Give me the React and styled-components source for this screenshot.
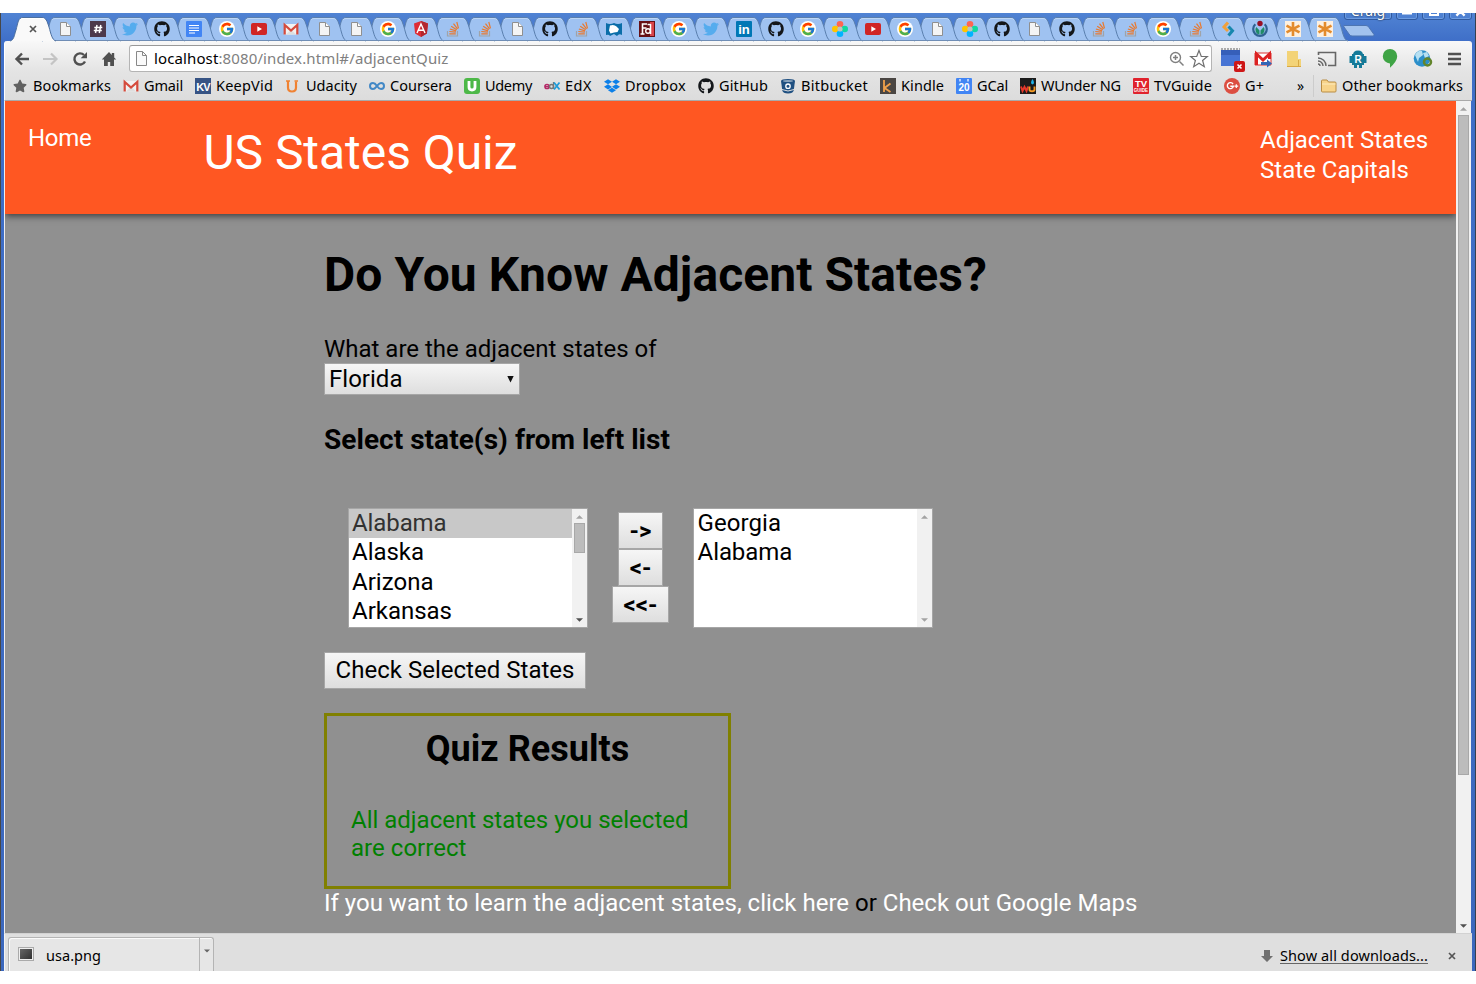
import React, { useLayoutEffect, useRef, useState } from "react";
import styled, { createGlobalStyle } from "styled-components";
import { FaGithub, FaTwitter, FaDropbox, FaStar } from "react-icons/fa";
import { FcGoogle } from "react-icons/fc";

const Global = createGlobalStyle`
  * { box-sizing: border-box; }
  body { margin: 0; background: #fff; overflow: hidden; }
  svg { display: block; flex: none; overflow: visible; }
  button { margin: 0; }
`;

const Desktop = styled.div`
  width: 1476px;
  height: 984px;
  padding-top: 13px;
  background: #fff;
`;
const Window = styled.div`
  height: 958px;
  display: flex;
  flex-direction: column;
  overflow: hidden;
  font-family: "Noto Sans", "Open Sans", sans-serif;
  color: #000;
  background: linear-gradient(#5083d3, #3f6fc8 28px, #3c68bd);
  border-left: 1px solid #474747;
  border-right: 1px solid #35404f;
  padding: 0 3px;
`;
const TabStrip = styled.div`
  position: relative;
  height: 28px;
  flex: none;
  padding: 4px 0 0 6px;
  display: flex;
`;
const TabBox = styled.div`
  position: relative;
  flex: none;
  width: 46px;
  height: 24px;
  margin-right: -13.71px;
  display: flex;
  align-items: center;
  justify-content: center;
  z-index: ${(p) => p.$z};
`;
const TabShape = styled.svg`
  position: absolute;
  inset: 0;
`;
const TabIcon = styled.div`
  position: relative;
  width: 16px;
  height: 16px;
  display: flex;
  align-items: center;
  justify-content: center;
`;
const NewTab = styled.svg`
  margin: 8px 0 0 9px;
`;
const Controls = styled.div`
  position: absolute;
  right: 0;
  top: -11px;
  display: flex;
  gap: 4px;
`;
const Control = styled.div`
  width: ${(p) => p.$w}px;
  height: 18px;
  border: 1px solid #315a9f;
  box-shadow: inset 0 0 0 1px #6d9ce1;
  border-radius: 3px;
  display: flex;
  align-items: center;
  justify-content: center;
  color: #fff;
  font: 14px/14px "Noto Sans", sans-serif;
  text-shadow: 0 0 2px #111;
`;
const Chrome = styled.div`
  flex: none;
  height: 60px;
  display: flex;
  flex-direction: column;
  background: linear-gradient(#f8f8f8, #e4e4e4 30px, #dcdcdc);
  border-bottom: 1px solid #a9a9a9;
  border-left: 1px solid #fff;
  border-radius: 3px 3px 0 0;
`;
const Toolbar = styled.div`
  height: 31px;
  padding: 4px 10px 0 9px;
  display: flex;
  align-items: center;
`;
const NavIcons = styled.div`
  display: flex;
  gap: 13px;
  width: 115px;
`;
const Omnibox = styled.div`
  width: 1083px;
  height: 27px;
  background: #fff;
  border: 1px solid #b4b4b4;
  border-top-color: #999;
  border-radius: 3px;
  display: flex;
  align-items: center;
  padding: 0 2px 0 5px;
`;
const Url = styled.div`
  flex: 1;
  margin-left: 6px;
  padding-bottom: 2px;
  font-size: 15px;
  line-height: 22px;
  color: #808080;
  b { font-weight: 400; color: #000; }
`;
const Extensions = styled.div`
  flex: 1;
  display: flex;
  align-items: center;
  gap: 15px;
  padding-left: 9px;
`;
const Bookmarks = styled.div`
  height: 28px;
  padding: 0 9px 0 7px;
  display: flex;
  align-items: center;
  gap: 12px;
`;
const Bookmark = styled.div`
  display: flex;
  align-items: center;
  gap: 5px;
  font-size: 14.5px;
  line-height: 20px;
`;
const OtherGroup = styled.div`
  margin-left: auto;
  display: flex;
  align-items: center;
  gap: 7px;
  font-size: 14px;
`;
const Divider = styled.div`
  width: 1px;
  height: 22px;
  margin-left: 1px;
  background: #ccc;
`;
const FitBox = styled.span`
  display: inline-block;
  white-space: pre;
`;
const BookmarkName = styled.div`
  padding-bottom: 2px;
`;

const Viewport = styled.div`
  flex: 1;
  display: flex;
  min-height: 0;
  border-left: 1px solid #eee;
`;
const Page = styled.div`
  width: 1451px;
  background: #909090;
  font-family: Roboto, sans-serif;
  font-size: 24px;
  line-height: 28px;
  overflow: hidden;
`;
const Header = styled.header`
  height: 113px;
  background: #ff5722;
  color: #fff;
  display: flex;
  align-items: flex-start;
  padding: 0 28px 0 23px;
  box-shadow: 0 2px 7px rgba(0, 0, 0, 0.6);
`;
const HomeLink = styled.div`
  width: 175.5px;
  padding-top: 23px;
`;
const Brand = styled.div`
  flex: 1;
  padding-top: 24px;
  font-size: 48px;
  line-height: 56px;
`;
const HeaderLinks = styled.div`
  padding-top: 24px;
  line-height: 30px;
`;
const Main = styled.main`
  padding: 33px 0 0 319px;
`;
const Title = styled.h1`
  margin: 0 0 32px;
  font-size: 48px;
  line-height: 56px;
  font-weight: 700;
`;
const Subtitle = styled.h3`
  margin: 29px 0 52px;
  font-size: 28px;
  line-height: 32px;
  font-weight: 700;
`;
const face = `
  background: linear-gradient(#f6f6f6, #dedede);
  border: 1px solid #a6a6a6;
  border-radius: 0;
  color: #000;
  font-family: Roboto, sans-serif;
  font-size: 24px;
`;
const Select = styled.div`
  ${face}
  width: 196px;
  height: 32px;
  padding: 0 5px 0 4px;
  display: flex;
  align-items: center;
  justify-content: space-between;
`;
const Picker = styled.div`
  display: flex;
  margin-left: 24px;
  height: 120px;
`;
const List = styled.div`
  width: 240px;
  height: 120px;
  border: 1px solid #a6a6a6;
  background: #fff;
  display: flex;
`;
const Options = styled.div`
  flex: 1;
`;
const Option = styled.div`
  height: 29.4px;
  line-height: 28px;
  padding-left: ${(p) => p.$inset || 3}px;
  background: ${(p) => (p.$on ? "#c8c8c8" : "transparent")};
  color: ${(p) => (p.$on ? "#323232" : "#000")};
`;
const Bar = styled.div`
  width: 15px;
  background: #f1f1f1;
  display: flex;
  flex-direction: column;
  align-items: center;
  justify-content: space-between;
  padding: 6px 0 5px;
`;
const Thumb = styled.div`
  width: 11px;
  height: ${(p) => p.$h}px;
  margin-top: 4px;
  margin-bottom: auto;
  background: #bcbcbc;
  border: 1px solid #a8a8a8;
`;
const Movers = styled.div`
  width: 105px;
  padding: 4px 0 0;
  display: flex;
  flex-direction: column;
  align-items: center;
`;
const MoveButton = styled.button`
  ${face}
  width: ${(p) => p.$w}px;
  height: 37px;
  padding: 0;
  font-weight: 700;
`;
const CheckButton = styled.button`
  ${face}
  display: block;
  width: 262px;
  height: 37px;
  padding: 0 0 2px;
  margin: 24px 0;
`;
const Results = styled.section`
  width: 407px;
  height: 176px;
  border: 3px solid #808000;
  padding: 12px 24px 0;
`;
const ResultsTitle = styled.h2`
  margin: 0 0 36px;
  font-size: 36px;
  line-height: 42px;
  text-align: center;
`;
const Verdict = styled.div`
  color: #008000;
`;
const Learn = styled.div`
  color: #000;
  em { font-style: normal; color: #fff; }
`;
const Shelf = styled.div`
  flex: none;
  height: 38px;
  background: #dfdfdf;
  border-top: 1px solid #d2d2d2;
  border-left: 1px solid #f4f4f4;
  display: flex;
  padding: 3px 16px 0 3px;
  font-size: 14.5px;
`;
const Download = styled.div`
  width: 206px;
  display: flex;
  border: 1px solid #b4b4b4;
  border-bottom: 0;
  border-radius: 3px 3px 0 0;
  background: #e6e6e6;
  box-shadow: inset 1px 1px #fafafa;
`;
const DownloadName = styled.div`
  flex: 1;
  display: flex;
  align-items: center;
  gap: 12px;
  padding: 0 0 0 9px;
  border-right: 1px solid #b4b4b4;
`;
const DownloadMenu = styled.div`
  width: 13px;
  padding: 11px 0 0 4px;
`;
const Thumbnail = styled.div`
  width: 16px;
  height: 14px;
  margin-top: -2px;
  border: 1px solid #aaa;
  box-shadow: inset 0 0 0 1px #eee;
  padding: 1px;
  background: linear-gradient(135deg, #666, #303030) content-box;
`;
const ShelfRight = styled.div`
  margin-left: auto;
  padding-top: 3px;
  display: flex;
  align-items: center;
  gap: 7px;
`;
const ShowAll = styled.div`
  margin-right: 13px;
  border-bottom: 1px solid #666;
  line-height: 17px;
  height: 17px;
`;

/* Label that spreads its letters so the text takes exactly the width w. */
function Fit({ w, children }) {
  const ref = useRef(null);
  const [space, setSpace] = useState(0);
  useLayoutEffect(() => {
    const el = ref.current;
    const range = document.createRange();
    range.selectNodeContents(el);
    const natural = range.getBoundingClientRect().width;
    setSpace((w - natural) / el.textContent.length);
  }, [w]);
  return (
    <FitBox ref={ref} style={{ letterSpacing: space }}>
      {children}
    </FitBox>
  );
}

const Svg = ({ w = 16, h = 16, box, children }) => (
  <svg width={w} height={h} viewBox={box || `0 0 ${w} ${h}`}>{children}</svg>
);
const glyph = { fontFamily: "Liberation Sans, sans-serif", fontWeight: 700, textAnchor: "middle" };

const Doc = () => (
  <Svg><path d="M3.500 1.500h6l4 4v9h-10z" fill="#f4f4f4" stroke="#8f8f8f" /><path d="M9.500 1.500v4h4" fill="#fff" stroke="#8f8f8f" /></Svg>
);
const Slack = () => (
  <Svg><rect width="16" height="16" fill="#4d394b" /><path d="M7 4 5.500 12M10.800 4 9.300 12M4.300 6.500h8M3.800 9.500h8" stroke="#fff" strokeWidth="1.500" /></Svg>
);
const Bird = () => <FaTwitter size={16} color="#55acee" />;
const Cat = () => <FaGithub size={16} color="#14171a" />;
const GDocs = () => (
  <Svg><rect width="16" height="16" rx="1" fill="#4285f4" /><path d="M3 4.500h10M3 7h10M3 9.500h10M3 12h6" stroke="#fff" strokeWidth="1.200" /></Svg>
);
const Google = () => (
  <Svg><circle cx="8" cy="8" r="8" fill="#fff" /><g transform="translate(.5 .5)"><FcGoogle size={15} /></g></Svg>
);
const Tube = () => (
  <Svg><rect y="2" width="16" height="12" rx="2" fill="#d02525" /><path d="M6.300 5.300v5.400L11 8z" fill="#fff" /></Svg>
);
const Mail = () => (
  <Svg><path d="M1 3h14v10.500H1z" fill="#f2f2f2" /><path d="M3 13.500 8 8.500l5 5z" fill="#dedede" /><path d="M1.700 13.500V4L8 9.500 14.300 4v9.500" fill="none" stroke="#d54b3d" strokeWidth="2.200" /></Svg>
);
const Angular = () => (
  <Svg><path d="M8 0l7 2.500-1.100 10L8 16l-5.900-3.500L1 2.500z" fill="#dd2c35" /><path d="M8 0l7 2.500-1.100 10L8 16z" fill="#b3272f" /><path d="M4 12 8 3l4 9M5.600 9.300h4.800" fill="none" stroke="#fff" strokeWidth="1.400" /></Svg>
);
const Stack = () => (
  <Svg>
    <path d="M2.500 10v5h10v-5" fill="none" stroke="#a0a3a8" strokeWidth="1.200" />
    <path d="M4.300 12.800h6.500M4.300 10.500l6.500.7M4.900 8l6.200 1.900M6.200 5.200l5.500 3.500M8.500 2.700l4 5.200M11.800 1l1.700 6.300" stroke="#e9792f" strokeWidth="1.200" />
  </Svg>
);
const Mdn = () => (
  <Svg><path d="M0 2q4 2 8 0 4 2 8 0v12q-3-2-5 1l-3-2-4 2q-1-2-4-1z" fill="#0a6da8" /><path d="M4 4.500q4-1.500 6.500 1L13 8l-1.500 3-3.500.5-3.500 1L3 9.500z" fill="#fff" /></Svg>
);
const Fd = () => (
  <Svg><rect width="16" height="16" fill="#651016" /><path d="M11 1h4v14h-4z" fill="#d8444a" /><path d="M3.500 13V3H8M3.500 7h4M1.500 13h4" fill="none" stroke="#fff" strokeWidth="1.600" /><circle cx="9" cy="10" r="2.300" fill="none" stroke="#fff" strokeWidth="1.400" /><path d="M11.500 3v10M8.500 3.500h3" stroke="#fff" strokeWidth="1.500" /></Svg>
);
const Linked = () => (
  <Svg><rect width="16" height="16" rx="1" fill="#0077b5" /><text x="8" y="12.500" fontSize="13" fill="#fff" {...glyph}>in</text></Svg>
);
const Flower = () => (
  <Svg>
    <circle cx="8" cy="3.300" r="3.300" fill="#ff6550" /><circle cx="3.300" cy="8" r="3.300" fill="#ffc400" />
    <circle cx="12.700" cy="8" r="3.300" fill="#11d8a0" /><circle cx="8" cy="12.700" r="3.300" fill="#00b4ff" />
    <circle cx="8" cy="8" r="2.600" fill="#b9c5c0" />
  </Svg>
);
const Arrows = () => (
  <Svg><path d="M8 1.500 4 6l4 4" fill="none" stroke="#f0a03b" strokeWidth="3" /><path d="m8.500 5.500 4 4.200L8.500 14.500" fill="none" stroke="#1787ad" strokeWidth="3" /></Svg>
);
const Wiki = () => (
  <Svg>
    <path d="M3.300 3.200a6.800 6.800 0 1 0 9.400 0" fill="none" stroke="#2f6291" strokeWidth="2.200" />
    <path d="M4.300 6a4.600 4.600 0 0 0 3.200 7.400V9.500zM11.700 6a4.600 4.600 0 0 1-3.200 7.400V9.500z" fill="#208b68" />
    <circle cx="8" cy="2.500" r="2.700" fill="#970f24" />
  </Svg>
);
const Star6 = () => (
  <Svg><rect width="16" height="16" fill="#fdf0e0" /><path d="M8 1v14M1.500 4.600l13 6.800M1.500 11.400l13-6.800" stroke="#e38b2c" strokeWidth="2.600" /></Svg>
);

const tabs = [
  Doc, Slack, Bird, Cat, GDocs, Google, Tube, Mail, Doc, Doc, Google, Angular, Stack, Stack, Doc, Cat, Stack,
  Mdn, Fd, Google, Bird, Linked, Cat, Google, Flower, Tube, Google, Doc, Flower, Cat, Doc, Cat, Stack, Stack,
  Google, Stack, Arrows, Wiki, Star6, Star6,
];

const Cross = ({ s = 8, c = "#555" }) => (
  <Svg w={s} h={s} box="0 0 8 8"><path d="M1 1l6 6M7 1 1 7" stroke={c} strokeWidth="1.700" /></Svg>
);
const Arrow = ({ up, c = "#505050", s = 7 }) => (
  <Svg w={s} h={4} box="0 0 8 4"><path d={up ? "M0 4 4 0l4 4z" : "M0 0l4 4 4-4z"} fill={c} /></Svg>
);

const Tab = ({ active, z, children }) => (
  <TabBox $z={z}>
    <TabShape width="46" height="24" viewBox="0 0 46 24">
      <path
        d="M0 24C4 23 4 19 6 13 8 6 8 .5 13 .5H32C36 .5 37 4 39 10 41 17 42 23 46 24"
        fill={active ? "#f9f9f9" : "#9fc2f1"}
        stroke={active ? "#4c6f9f" : "#5a7fae"}
      />
      <path d="M10 3q1-1.500 3-1.500h19q2 0 3 1.500" fill="none" stroke={active ? "#fff" : "#bdd6f6"} />
      {!active && <path d="M0 23.500h46" stroke="#6f8db5" />}
    </TabShape>
    <TabIcon>{children}</TabIcon>
  </TabBox>
);

const KV = () => (
  <Svg><rect width="16" height="16" fill="#365384" /><text x="8" y="12.500" fontSize="11" letterSpacing="-1" fill="#fff" {...glyph}>KV</text></Svg>
);
const Udacity = () => (
  <Svg><path d="M3 3v6.500q0 4 4 4t4-4V3.500" fill="none" stroke="#f08232" strokeWidth="2.200" /><path d="M1 3h4M9.500 3H13" stroke="#f08232" strokeWidth="1.500" /></Svg>
);
const Coursera = () => (
  <Svg><path d="M8 8C6 5 5 5 4 5a3 3 0 0 0 0 6c2 0 3-2 4-3s2-3 4-3a3 3 0 0 1 0 6c-1 0-2 0-4-3" fill="none" stroke="#4288c6" strokeWidth="2" /></Svg>
);
const Udemy = () => (
  <Svg><rect width="16" height="16" rx="3" fill="#4db848" /><path d="M5 3v6q0 3 3 3t3-3V3" fill="none" stroke="#fff" strokeWidth="2.800" /></Svg>
);
const Edx = () => (
  <Svg>
    <circle cx="3" cy="8.500" r="2" fill="none" stroke="#b52a67" strokeWidth="1.700" /><path d="M1 8.500h4" stroke="#b52a67" /><circle cx="7.500" cy="8.500" r="2" fill="none" stroke="#777" strokeWidth="1.500" />
    <path d="M9.500 4v7" stroke="#777" strokeWidth="1.300" /><path d="m10 4.500 5.500 7M15.500 4.500l-5.500 7" stroke="#1e9bd8" strokeWidth="1.800" />
  </Svg>
);
const Bucket = () => (
  <Svg><path d="M1 3q0-2 7-2t7 2l-1.300 9.500Q13 15.500 8 15.500T2.300 12.500z" fill="#205081" /><ellipse cx="8" cy="3" rx="5" ry="1" fill="#8ba4bd" /><circle cx="8" cy="8.200" r="2.200" fill="none" stroke="#fff" strokeWidth="1.300" /><path d="M2 11.500q6 3 12 0" stroke="#e0e0e0" fill="none" /></Svg>
);
const Kindle = () => (
  <Svg><rect width="16" height="16" fill="#4a4643" /><path d="M4 2v12M10.500 5.500 4.500 10l6 4" fill="none" stroke="#f0a04a" strokeWidth="1.800" /></Svg>
);
const Cal = () => (
  <Svg><rect width="16" height="16" rx="1" fill="#4285f4" /><path d="M4 1v2.500M12 1v2.500" stroke="#dbe8ff" strokeWidth="1.500" /><text x="8" y="13" fontSize="10" fill="#fff" {...glyph}>20</text></Svg>
);
const Wunder = () => (
  <Svg><rect width="16" height="16" fill="#1c1c1c" /><path d="M1 8.500 2.500 13 4.500 9l2 4L8 8.500" fill="none" stroke="#e5382b" strokeWidth="2" /><path d="M9.500 8.500v3q0 1.800 2.500 1.800t2.500-1.800v-3" fill="none" stroke="#f59a23" strokeWidth="1.900" /><path d="M12.500 1q3 4.500 0 5.500-3-1 0-5.500" fill="#1fb3ea" /></Svg>
);
const TvG = () => (
  <Svg><rect width="16" height="16" rx="1" fill="#e0222c" /><text x="8" y="9" fontSize="9.500" fill="#fff" {...glyph}>TV</text><text x="8" y="14" fontSize="4.500" fill="#fff" {...glyph}>GUIDE</text></Svg>
);
const GPlus = () => (
  <Svg><circle cx="8" cy="8" r="8" fill="#dc4e41" /><path d="M9 6.200A3 3 0 1 0 9.300 8.300H6.300" fill="none" stroke="#fff" strokeWidth="1.400" /><path d="M12.300 6.300v3.800M10.400 8.200h3.800" stroke="#fff" strokeWidth="1.200" /></Svg>
);
const Folder = () => (
  <Svg><path d="M.5 3q0-1 1-1h4.500l1.500 2h6.500q1 0 1 1v8q0 1-1 1H1.500q-1 0-1-1z" fill="#f8d48b" stroke="#b98d45" /><path d="M1 6h13.500" stroke="#fdebbd" /></Svg>
);
const Favorite = () => (
  <Svg><g transform="translate(1 1)"><FaStar size={14} color="#616161" /></g></Svg>
);
const Drop = () => <FaDropbox size={16} color="#0d80e8" />;

const bookmarks = [
  [Favorite, "Bookmarks", 78], [Mail, "Gmail", 39], [KV, "KeepVid", 57], [Udacity, "Udacity", 51],
  [Coursera, "Coursera", 62], [Udemy, "Udemy", 47], [Edx, "EdX", 27], [Drop, "Dropbox", 61],
  [Cat, "GitHub", 49], [Bucket, "Bitbucket", 67], [Kindle, "Kindle", 43], [Cal, "GCal", 31],
  [Wunder, "WUnder NG", 80], [TvG, "TVGuide", 58], [GPlus, "G+", 19],
];

export default function App() {
  return (
    <Desktop>
      <Global />
      <Window>
        <TabStrip>
          <Tab active z={60}><Cross /></Tab>
          {tabs.map((Icon, i) => (
            <Tab key={i} z={50 - i}><Icon /></Tab>
          ))}
          <NewTab width="34" height="12" viewBox="0 0 34 12">
            <path d="M1 .5h22q2 0 3 2l5 7q0 1.500-1 1.500H9q-2 0-3-2L1 2q-1-1.500 0-1.500z" fill="#a2c2ee" stroke="#4d75b2" />
          </NewTab>
          <Controls>
            <Control $w={48}>Craig</Control>
            <Control $w={22}><Svg w={10} h={8}><path d="M0 6h10" stroke="#fff" strokeWidth="3" /></Svg></Control>
            <Control $w={23}><Svg w={10} h={12}><rect x="1" y="1" width="8" height="9" fill="none" stroke="#fff" strokeWidth="2" /></Svg></Control>
            <Control $w={23}><Cross s={11} c="#fff" /></Control>
          </Controls>
        </TabStrip>

        <Chrome>
          <Toolbar>
            <NavIcons>
              <Svg><path d="M15 8H3M8 2.500 2.500 8 8 13.500" fill="none" stroke="#505050" strokeWidth="2.400" /></Svg>
              <Svg><path d="M0 8h13M8 2.500 13.500 8 8 13.500" fill="none" stroke="#c4c4c4" strokeWidth="2.200" /></Svg>
              <Svg><path d="M13 10.500a5.600 5.600 0 1 1-1-6.500" fill="none" stroke="#505050" strokeWidth="2.400" /><path d="M15 1v6.300H8.700z" fill="#505050" /></Svg>
              <Svg><path d="M8 1 .8 8.500H3V15h3.800v-4h2.400v4H13V8.500h2.200L13.200 6.400V2h-2.400v2z" fill="#505050" /></Svg>
            </NavIcons>
            <Omnibox>
              <Svg w={13} h={17}><path d="M1.500 1.500h6l4 4v10h-10z" fill="#fafafa" stroke="#888" /><path d="M7.500 1.500v4h4" fill="none" stroke="#888" /></Svg>
              <Url><Fit w={294.5}><b>localhost</b>:8080/index.html#/adjacentQuiz</Fit></Url>
              <Svg w={16} h={16}><circle cx="6.500" cy="6.500" r="5" fill="none" stroke="#808080" strokeWidth="1.400" /><path d="M6.500 4v5M4 6.500h5M10.500 10.500l4 4" stroke="#808080" strokeWidth="1.500" /></Svg>
              <Svg w={24} h={20} box="-4 0 24 20"><path d="M10 1.500l2.300 6h6l-4.700 4 1.700 6.200L10 14.200l-5.300 3.500 1.700-6.200-4.700-4h6z" fill="none" stroke="#707070" strokeWidth="1.200" /></Svg>
            </Omnibox>
            <Extensions>
              <Svg w={18} h={22}><path d="M0 2h19v16H0z" fill="#4774d4" /><path d="M0 2h19v5H0z" fill="#365fb9" /><path d="M0 1h19" stroke="#aaa" strokeWidth="2" strokeDasharray="2 1" /><rect x="13" y="13" width="11" height="11" rx="2" fill="#ce1717" /><path d="m16.500 16.500 4 4m0-4-4 4" stroke="#fff" strokeWidth="1.600" /></Svg>
              <Svg w={18} h={18}><path d="M1 3h16v12H1z" fill="#fff" stroke="#d33" /><path d="M2.500 15V4L9 10l6.500-6v5" fill="none" stroke="#dc2222" strokeWidth="3" /><path d="M7 12h6V9.500l5 4-5 4V15H7z" fill="#3465b5" /></Svg>
              <Svg w={15} h={18}><path d="M0 1h11v8h3v8H0z" fill="#f3d377" /><path d="M0 16.500h14M11.500 10v6" stroke="#d8a944" /></Svg>
              <Svg w={17} h={18}><path d="M1.500 5V2.500h17v13H11" fill="none" stroke="#666" strokeWidth="1.600" /><path d="M1 8a8 8 0 0 1 8 8M1 11a5 5 0 0 1 5 5M1 14a2 2 0 0 1 2 2" fill="none" stroke="#666" strokeWidth="1.400" /></Svg>
              <Svg w={18} h={20}><path d="M4 6q0-4.500 5-4.500T14 6zM3 5h12v11H3zM.5 7H3v7H.5zM15 7h2.500v7H15zM5 15h3v4H5zM10 15h3v4h-3z" fill="#147a98" /><text x="9" y="14" fontSize="10" fill="#fff" {...glyph}>R</text></Svg>
              <Svg w={16} h={19}><path d="M8 0a7.200 7.200 0 0 1 7.200 7.200q0 4.800-7.200 11.500v-4.300A7.200 7.200 0 0 1 8 0" fill="#3fa445" /></Svg>
              <Svg w={20} h={18}><circle cx="9" cy="8.500" r="8.300" fill="#2c8fca" /><path d="M2 5q3-5 7-4l1 4-4 3-1 4zM10 3l4-1 2 4-4 2z" fill="#b7e0f2" /><circle cx="14.500" cy="12" r="3.500" fill="none" stroke="#62852c" strokeWidth="2.500" /></Svg>
              <Svg w={14} h={14}><path d="M0 2h13M0 7h13M0 12h13" stroke="#505050" strokeWidth="2.600" /></Svg>
            </Extensions>
          </Toolbar>
          <Bookmarks>
            {bookmarks.map(([Icon, name, w]) => (
              <Bookmark key={name}><Icon /><BookmarkName><Fit w={w}>{name}</Fit></BookmarkName></Bookmark>
            ))}
            <OtherGroup>
              <BookmarkName><Fit w={8}>»</Fit></BookmarkName>
              <Divider />
              <Bookmark><Folder /><BookmarkName><Fit w={121}>Other bookmarks</Fit></BookmarkName></Bookmark>
            </OtherGroup>
          </Bookmarks>
        </Chrome>

        <Viewport>
          <Page>
            <Header>
              <HomeLink><Fit w={63.5}>Home</Fit></HomeLink>
              <Brand><Fit w={314}>US States Quiz</Fit></Brand>
              <HeaderLinks>
                <div><Fit w={168}>Adjacent States</Fit></div>
                <div><Fit w={149}>State Capitals</Fit></div>
              </HeaderLinks>
            </Header>
            <Main>
              <Title><Fit w={663}>Do You Know Adjacent States?</Fit></Title>
              <div><Fit w={332.5}>What are the adjacent states of</Fit></div>
              <Select>
                <Fit w={73.5}>Florida</Fit>
                <Svg w={7} h={7}><path d="M.3 0h6.400L3.500 6.500z" fill="#111" /></Svg>
              </Select>
              <Subtitle><Fit w={346}>Select state(s) from left list</Fit></Subtitle>
              <Picker>
                <List>
                  <Options>
                    <Option $on><Fit w={94.5}>Alabama</Fit></Option>
                    <Option><Fit w={72}>Alaska</Fit></Option>
                    <Option><Fit w={81.5}>Arizona</Fit></Option>
                    <Option><Fit w={100}>Arkansas</Fit></Option>
                  </Options>
                  <Bar><Arrow up c="#a3a3a3" /><Thumb $h={30} /><Arrow /></Bar>
                </List>
                <Movers>
                  <MoveButton $w={45}>-&gt;</MoveButton>
                  <MoveButton $w={45}>&lt;-</MoveButton>
                  <MoveButton $w={57}>&lt;&lt;-</MoveButton>
                </Movers>
                <List>
                  <Options>
                    <Option $inset={3.6}><Fit w={83.500}>Georgia</Fit></Option>
                    <Option $inset={3.6}><Fit w={94.5}>Alabama</Fit></Option>
                  </Options>
                  <Bar><Arrow up c="#a3a3a3" /><Arrow c="#a3a3a3" /></Bar>
                </List>
              </Picker>
              <CheckButton><Fit w={239}>Check Selected States</Fit></CheckButton>
              <Results>
                <ResultsTitle><Fit w={203.5}>Quiz Results</Fit></ResultsTitle>
                <Verdict>
                  <div><Fit w={337.5}>All adjacent states you selected</Fit></div>
                  <div><Fit w={115.5}>are correct</Fit></div>
                </Verdict>
              </Results>
              <Learn>
                <Fit w={813.3}><em>If you want to learn the adjacent states, click here</em> or <em>Check out Google Maps</em></Fit>
              </Learn>
            </Main>
          </Page>
          <Bar><Arrow up c="#a3a3a3" /><Thumb $h={660} /><Arrow /></Bar>
        </Viewport>

        <Shelf>
          <Download>
            <DownloadName><Thumbnail /><Fit w={55}>usa.png</Fit></DownloadName>
            <DownloadMenu><Arrow s={6} c="#666" /></DownloadMenu>
          </Download>
          <ShelfRight>
            <Svg w={12} h={12}><path d="M3 0h6v6h3l-6 6-6-6h3z" fill="#707070" /></Svg>
            <ShowAll><Fit w={148}>Show all downloads...</Fit></ShowAll>
            <Cross s={8} />
          </ShelfRight>
        </Shelf>
      </Window>
    </Desktop>
  );
}
